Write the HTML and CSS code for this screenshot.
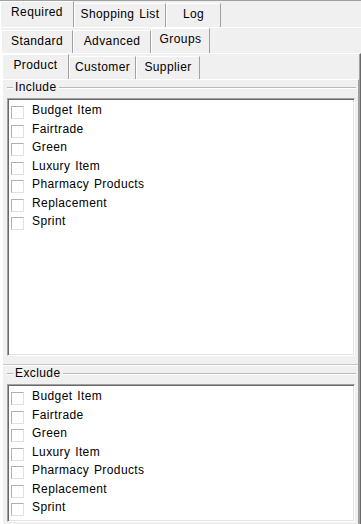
FILE: index.html
```html
<!DOCTYPE html>
<html>
<head>
<meta charset="utf-8">
<link rel="stylesheet" href="styles.css">
</head>
<body>
<div class="tabctl lvl1">
  <div class="tabrow row1">
    <div class="tab sel w-required">Required</div>
    <div class="tab w-shopping">Shopping List</div>
    <div class="tab w-log">Log</div>
  </div>
  <div class="page p1">
    <div class="tabctl lvl2">
      <div class="tabrow">
        <div class="tab w-standard">Standard</div>
        <div class="tab w-advanced">Advanced</div>
        <div class="tab sel w-groups">Groups</div>
      </div>
      <div class="page p2">
        <div class="tabctl lvl3">
          <div class="tabrow">
            <div class="tab sel w-product">Product</div>
            <div class="tab w-customer">Customer</div>
            <div class="tab w-supplier">Supplier</div>
          </div>
          <div class="page p3">
            <div class="group include">
              <div class="ghead"><span class="glabel">Include</span></div>
              <div class="listbox lb-include">
                <div class="item"><span class="cb"></span><span class="txt">Budget Item</span></div>
                <div class="item"><span class="cb"></span><span class="txt">Fairtrade</span></div>
                <div class="item"><span class="cb"></span><span class="txt">Green</span></div>
                <div class="item"><span class="cb"></span><span class="txt">Luxury Item</span></div>
                <div class="item"><span class="cb"></span><span class="txt">Pharmacy Products</span></div>
                <div class="item"><span class="cb"></span><span class="txt">Replacement</span></div>
                <div class="item"><span class="cb"></span><span class="txt">Sprint</span></div>
              </div>
            </div>
            <div class="group exclude">
              <div class="ghead"><span class="glabel">Exclude</span></div>
              <div class="listbox lb-exclude">
                <div class="item"><span class="cb"></span><span class="txt">Budget Item</span></div>
                <div class="item"><span class="cb"></span><span class="txt">Fairtrade</span></div>
                <div class="item"><span class="cb"></span><span class="txt">Green</span></div>
                <div class="item"><span class="cb"></span><span class="txt">Luxury Item</span></div>
                <div class="item"><span class="cb"></span><span class="txt">Pharmacy Products</span></div>
                <div class="item"><span class="cb"></span><span class="txt">Replacement</span></div>
                <div class="item"><span class="cb"></span><span class="txt">Sprint</span></div>
              </div>
            </div>
          </div>
        </div>
      </div>
    </div>
  </div>
</div>
</body>
</html>
```

FILE: styles.css
```css
* { box-sizing: border-box; }
html, body { margin: 0; padding: 0; }
body {
  background: #f0f0f0;
  width: 361px;
  height: 524px;
  overflow: hidden;
  border-top: 1px solid #a0a0a0;
  font-family: "Liberation Sans", Arial, sans-serif;
  font-size: 12px;
  letter-spacing: 0.4px;
  word-spacing: 1px;
  color: #000;
}

.tabrow {
  display: flex;
  height: 25px;
}
.tabrow.row1 { height: 26px; }

.tab {
  margin-top: 2px;
  border-top: 1px solid #fff;
  border-left: 1px solid #fff;
  border-right: 1px solid #a0a0a0;
  line-height: 21px;
  text-align: center;
  white-space: nowrap;
}
.tab.sel { margin-top: 0; }

.w-required { width: 74px; }
.w-shopping { width: 92px; }
.w-log { width: 55px; }
.w-standard { width: 72px; }
.w-advanced { width: 78px; }
.w-groups { width: 59px; }
.w-product { width: 67px; }
.w-customer { width: 67px; }
.w-supplier { width: 64px; }

.page {
  border-top: 1px solid #fff;
  border-left: 1px solid #fff;
}
.p1 { width: 361px; }
.p2 {
  width: 360px;
  border-right: 1px solid #696969;
  box-shadow: inset -1px 0 0 #a0a0a0;
}
.p3 {
  width: 357px;
  border-right: 1px solid #a0a0a0;
  height: 460px;
}

.group {
  padding: 1px 3px 0 4px;
}
.group.include {
  padding-bottom: 8px;
  border-bottom: 1px solid #c4c4c4;
  box-shadow: 0 1px 0 #fff;
}
.group.exclude {
  margin-top: 1px;
}

.ghead {
  display: flex;
  align-items: flex-start;
  height: 14px;
  margin-right: -1px;
}
.ghead::before,
.ghead::after {
  content: "";
  height: 0;
  margin-top: 6px;
  border-top: 1px solid #b8b8b8;
  border-bottom: 1px solid #fff;
}
.ghead::before { width: 6px; }
.ghead::after { flex: 1; }
.glabel {
  padding: 0 2px;
  line-height: 13px;
}

.listbox {
  margin-top: 3px;
  background: #fff;
  border: 1px solid;
  border-color: #a0a0a0 #fff #fff #a0a0a0;
  box-shadow: inset 1px 1px 0 #696969, inset -1px -1px 0 #e3e3e3;
  padding-top: 2px;
}
.lb-include { height: 258px; }
.lb-exclude { height: 138px; }

.item {
  display: flex;
  align-items: flex-start;
  height: 18.5px;
}
.cb {
  width: 13px;
  height: 13px;
  margin: 5px 0 0 3px;
  background: #fff;
  border: 1px solid;
  border-color: #b0b0b0 #e0e0e0 #e0e0e0 #b0b0b0;
  flex: none;
}
.txt {
  margin-left: 8px;
  line-height: 18.5px;
  white-space: nowrap;
}
```
